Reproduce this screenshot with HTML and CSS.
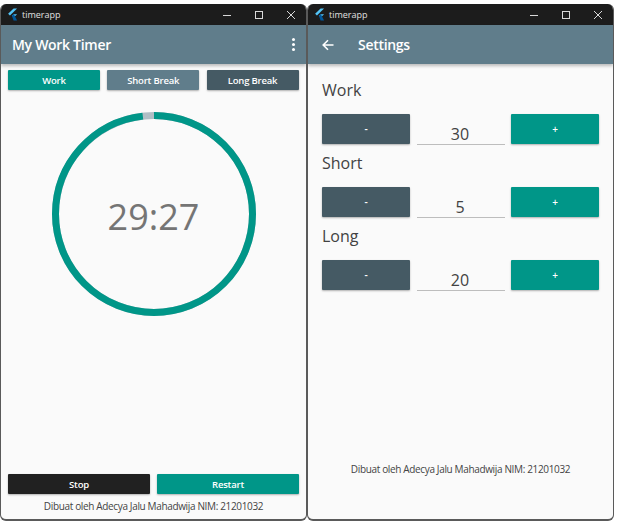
FILE: index.html
```html
<!DOCTYPE html>
<html lang="id">

<head>
  <meta charset="UTF-8">
  <meta name="viewport" content="width=device-width, initial-scale=1.0">
  <title>timerapp</title>
  <link rel="stylesheet" href="styles.css">
</head>

<body>
  <div class="desktop">

    <!-- Timer window -->
    <section class="window window-timer">
      <div class="titlebar">
        <svg class="flutter-logo" viewBox="0 0 12 14" width="11" height="13">
          <path d="M7.2 0.5H11L3.2 8.2 1.2 6.3z" fill="#54c5f8" />
          <path d="M7.2 6.6H11L7.6 10 5.3 8.4z" fill="#54c5f8" />
          <path d="M5.3 8.4L7.4 6.5 11 13.5H7.2z" fill="#01579b" />
        </svg>
        <span class="titlebar-name">timerapp</span>
        <div class="titlebar-controls">
          <svg viewBox="0 0 10 10" width="10" height="10"><path d="M1 5.5H9" /></svg>
          <svg viewBox="0 0 10 10" width="10" height="10"><rect x="1.5" y="1.5" width="7" height="7" /></svg>
          <svg viewBox="0 0 10 10" width="10" height="10"><path d="M1 1L9 9M9 1L1 9" /></svg>
        </div>
      </div>
      <header class="appbar">
        <h1>My Work Timer</h1>
        <div class="menu-dots"><i></i><i></i><i></i></div>
      </header>
      <main class="timer-body">
        <div class="tabs">
          <button class="btn btn-teal">Work</button>
          <button class="btn btn-grey">Short Break</button>
          <button class="btn btn-slate">Long Break</button>
        </div>
        <div class="ring-wrap">
          <svg class="ring" viewBox="0 0 204 204" width="204" height="204">
            <circle cx="102" cy="102" r="98.5" class="ring-bg" />
            <circle cx="102" cy="102" r="98.5" class="ring-fill" pathLength="1800" stroke-dasharray="1767 33" transform="rotate(-90 102 102)" />
          </svg>
          <div class="ring-time">29:27</div>
        </div>
        <div class="actions">
          <button class="btn btn-black">Stop</button>
          <button class="btn btn-teal">Restart</button>
        </div>
        <p class="credit credit-timer">Dibuat oleh Adecya Jalu Mahadwija NIM: 21201032</p>
      </main>
    </section>

    <!-- Settings window -->
    <section class="window window-settings">
      <div class="titlebar">
        <svg class="flutter-logo" viewBox="0 0 12 14" width="11" height="13">
          <path d="M7.2 0.5H11L3.2 8.2 1.2 6.3z" fill="#54c5f8" />
          <path d="M7.2 6.6H11L7.6 10 5.3 8.4z" fill="#54c5f8" />
          <path d="M5.3 8.4L7.4 6.5 11 13.5H7.2z" fill="#01579b" />
        </svg>
        <span class="titlebar-name">timerapp</span>
        <div class="titlebar-controls">
          <svg viewBox="0 0 10 10" width="10" height="10"><path d="M1 5.5H9" /></svg>
          <svg viewBox="0 0 10 10" width="10" height="10"><rect x="1.5" y="1.5" width="7" height="7" /></svg>
          <svg viewBox="0 0 10 10" width="10" height="10"><path d="M1 1L9 9M9 1L1 9" /></svg>
        </div>
      </div>
      <header class="appbar appbar-settings">
        <svg class="back-arrow" viewBox="0 0 12 12" width="12" height="12">
          <path d="M11.5 6H1.5M6 1.2L1.2 6 6 10.8" />
        </svg>
        <h1>Settings</h1>
      </header>
      <main class="settings-body">
        <div class="setting">
          <div class="setting-label">Work</div>
          <div class="setting-row">
            <button class="btn btn-slate">-</button>
            <div class="setting-value">30</div>
            <button class="btn btn-teal">+</button>
          </div>
        </div>
        <div class="setting">
          <div class="setting-label">Short</div>
          <div class="setting-row">
            <button class="btn btn-slate">-</button>
            <div class="setting-value">5</div>
            <button class="btn btn-teal">+</button>
          </div>
        </div>
        <div class="setting">
          <div class="setting-label">Long</div>
          <div class="setting-row">
            <button class="btn btn-slate">-</button>
            <div class="setting-value">20</div>
            <button class="btn btn-teal">+</button>
          </div>
        </div>
        <p class="credit credit-settings">Dibuat oleh Adecya Jalu Mahadwija NIM: 21201032</p>
      </main>
    </section>

  </div>
</body>

</html>
```

FILE: styles.css
```css
* {
  box-sizing: border-box;
}

body {
  font-family: "Open Sans", "Noto Sans", Arial, sans-serif;
  margin: 0;
  padding: 0;
  background-color: #fff;
}

.desktop {
  display: flex;
  width: 617px;
  height: 523px;
  padding: 4px 3px 2px 0;
}

.window {
  display: flex;
  flex-direction: column;
  height: 517px;
  background-color: #fafafa;
  border-radius: 6px;
  overflow: hidden;
  border-left: 1px solid #5a5a5a;
  border-right: 1px solid #5a5a5a;
  border-bottom: 2px solid #5a5a5a;
}

.window-timer {
  width: 307px;
}

.window-settings {
  width: 307px;
}

.titlebar {
  display: flex;
  align-items: center;
  flex: none;
  height: 21px;
  padding-left: 6px;
  background-color: #1c1c1c;
  color: #e0e0e0;
}

.flutter-logo {
  margin-right: 4px;
}

.titlebar-name {
  font-size: 9px;
}

.titlebar-controls {
  display: flex;
  gap: 22px;
  margin-left: auto;
  margin-right: 10.5px;
}

.titlebar-controls svg {
  fill: none;
  stroke: #d8d8d8;
  stroke-width: 1;
}

.appbar {
  display: flex;
  align-items: center;
  justify-content: space-between;
  flex: none;
  height: 39px;
  padding: 0 11px;
  background-color: #607d8b;
  color: #fff;
  box-shadow: 0 2px 3px rgba(0, 0, 0, 0.25);
  position: relative;
}

.appbar h1 {
  margin: 0;
  font-size: 14px;
  font-weight: 600;
  letter-spacing: -0.3px;
}

.appbar-settings {
  justify-content: flex-start;
  gap: 24px;
  padding-left: 14px;
}

.back-arrow {
  fill: none;
  stroke: #fff;
  stroke-width: 1.6;
}

.menu-dots {
  display: flex;
  flex-direction: column;
  gap: 2px;
}

.menu-dots i {
  display: block;
  width: 3px;
  height: 3px;
  border-radius: 50%;
  background-color: #fff;
}

.btn {
  height: 20px;
  padding: 0;
  border: none;
  border-radius: 1px;
  color: #fff;
  font-family: inherit;
  font-size: 9.5px;
  font-weight: 600;
  letter-spacing: -0.2px;
  box-shadow: 0 1px 2px rgba(0, 0, 0, 0.3);
}

.btn-teal {
  background-color: #009688;
}

.btn-grey {
  background-color: #607d8b;
}

.btn-slate {
  background-color: #455a64;
}

.btn-black {
  background-color: #212121;
}

.timer-body {
  display: flex;
  flex-direction: column;
  flex: 1;
  padding: 6px 7px 0;
}

.tabs {
  display: grid;
  grid-template-columns: repeat(3, 92px);
  justify-content: space-between;
  width: 290.5px;
}

.ring-wrap {
  display: flex;
  align-items: center;
  justify-content: center;
  position: relative;
  height: 204px;
  margin-top: 22px;
}

.ring {
  fill: none;
  stroke-width: 7;
}

.ring-bg {
  stroke: #b0bec5;
}

.ring-fill {
  stroke: #009688;
}

.ring-time {
  position: absolute;
  top: 51%;
  left: 0;
  right: 0;
  transform: translateY(-50%);
  text-align: center;
  font-size: 36px;
  color: #757575;
}

.actions {
  display: grid;
  grid-template-columns: 142px 142px;
  justify-content: space-between;
  margin-top: 158px;
}

.credit {
  margin: 0;
  text-align: center;
  font-size: 10px;
  letter-spacing: -0.35px;
  color: #444;
}

.credit-timer {
  margin-top: 5px;
}

.settings-body {
  display: flex;
  flex-direction: column;
  flex: 1;
  padding: 14px 14px 0;
}

.setting {
  height: 73px;
}

.setting-label {
  height: 36px;
  font-size: 16px;
  line-height: 25px;
  color: #424242;
}

.setting-row {
  display: grid;
  grid-template-columns: 88px 88px 88px;
  justify-content: space-between;
  align-items: end;
}

.setting-row .btn {
  height: 30px;
  font-size: 10px;
}

.setting-value {
  height: 24px;
  margin-bottom: -1px;
  padding-right: 1px;
  border-bottom: 1px solid #bdbdbd;
  text-align: center;
  font-size: 16px;
  line-height: 26px;
  color: #424242;
}

.credit-settings {
  margin-top: 165px;
}
```
